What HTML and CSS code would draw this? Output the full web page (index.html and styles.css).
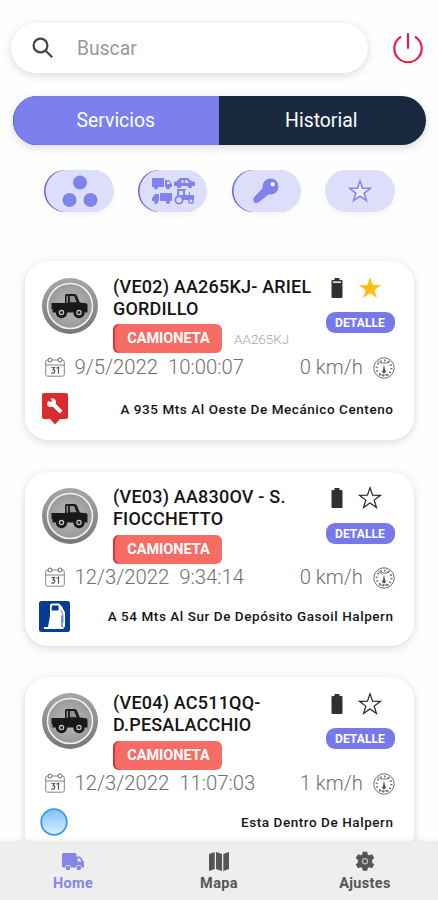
FILE: index.html
```html
<!DOCTYPE html>
<html lang="es">
<head>
<meta charset="utf-8">
<title>Servicios</title>
<link rel="stylesheet" href="styles.css">
</head>
<body>
<svg class="defs" aria-hidden="true">
  <defs>
    <radialGradient id="steel"><stop offset="0" stop-color="#bbb"/><stop offset="1" stop-color="#999"/></radialGradient>
    <linearGradient id="rim" x1="0" y1="0" x2="0" y2="1"><stop offset="0" stop-color="#a6a6a6"/><stop offset="1" stop-color="#777"/></linearGradient>
    <linearGradient id="sky" x1="0" y1="0" x2="0" y2="1"><stop offset="0" stop-color="#7fc2f8"/><stop offset="1" stop-color="#d8efff"/></linearGradient>
    <symbol id="pickup" viewBox="0 0 56 56">
      <circle cx="28" cy="28" r="28" fill="url(#rim)"/>
      <circle cx="28" cy="28" r="22.5" fill="url(#steel)" stroke="#f2f2f2" stroke-width="1.600"/>
      <path d="M9.500 25H23v-7.500q0-1.500 1.500-1.500h8q1.800 0 2.500 1.800l2.800 6.700 6.200.8q1.500.2 1.500 1.700v7.500H10.500v-3.500h-1z" fill="#191919"/>
      <path d="M24.500 17.800h1.500v7h-1.500zM27.800 18h4.400l2.500 6.300h-6.900z" fill="#909090"/>
      <g fill="#c9c9c9" stroke="#191919" stroke-width="3"><circle cx="19.500" cy="34.500" r="4.200"/><circle cx="37" cy="34.500" r="4.200"/></g>
      <circle cx="19.500" cy="34.500" r="1.500" fill="#222"/><circle cx="37" cy="34.500" r="1.500" fill="#222"/>
    </symbol>
    <symbol id="calendar" viewBox="0 0 20 20">
      <g fill="none" stroke="#858585" stroke-width="1"><rect x=".7" y="3" width="18.600" height="16.200" rx="2"/><path d="M.7 8h18.600"/></g>
      <g fill="#fff" stroke="#666"><circle cx="5" cy="3" r="2"/><circle cx="15" cy="3" r="2"/></g>
      <path d="M6.500 10.500h3L8 12.700q2 0 1.700 2t-3.400 1.300M11.500 11.200l2-.9v6.500" fill="none" stroke="#555" stroke-width="1.200"/>
    </symbol>
    <symbol id="gauge" viewBox="0 0 22 22">
      <g fill="none" stroke="#606060"><circle cx="11" cy="11" r="10.200" stroke-width=".9"/><circle cx="11" cy="11" r="7.400" stroke-width="2" stroke-dasharray="1.300 2.575"/><path d="M5 4l3 2h6l3-2M6 18h10" stroke-width=".9"/></g>
      <path d="M11 7.500l1.100 5.500a1.800 1.800 0 1 1-2.200 0z" fill="#555"/>
    </symbol>
    <symbol id="battery" viewBox="0 0 12 22"><path d="M3.500 1h5v2H10.500q1 0 1 1v16q0 1-1 1h-9q-1 0-1-1V4q0-1 1-1h2z" fill="#303030"/></symbol>
    <symbol id="battery-low" viewBox="0 0 12 22"><path d="M3.500 1h5v2H10.500q1 0 1 1v16q0 1-1 1h-9q-1 0-1-1V4q0-1 1-1h2z" fill="#303030"/><path d="M2 4.300h8V6H2z" fill="#ddd"/></symbol>
    <symbol id="star" viewBox="0 0 24 24"><path d="M12 1.800l2.600 7.400 7.900.1-6.300 4.800 2.300 7.500-6.500-4.500-6.500 4.500 2.300-7.500-6.300-4.800 7.900-.1z"/></symbol>
    <symbol id="truck" viewBox="0 0 24 20">
      <path d="M1 3Q1 1.500 2.500 1.500H14q1.500 0 1.500 1.500V5h3.500L23 10v6h-2.200a3 3 0 0 0-5.900 0H9.900a3 3 0 0 0-5.900 0H2.500Q1 16 1 14.500z"/>
      <circle cx="7" cy="16.500" r="2.300"/><circle cx="17.900" cy="16.500" r="2.300"/><path d="M16.600 6.700h1.800l2.300 3.300h-4.100z" fill="#eee"/>
    </symbol>
  </defs>
</svg>

<div class="screen">
  <header class="top">
    <label class="search">
      <svg width="22" height="22" viewBox="0 0 22 22" fill="none" stroke="#444" stroke-width="2.200"><circle cx="8.500" cy="8.500" r="6.900"/><path d="M13.500 13.500l6.700 6.700"/></svg>
      <span class="placeholder">Buscar</span>
    </label>
    <svg class="power" width="30" height="30" viewBox="0 0 30 30" fill="none" stroke="#e41b44" stroke-width="2.100" stroke-linecap="round"><path d="M15 1v14M7.300 4.200a13.700 13.700 0 1 0 15.400 0"/></svg>
  </header>

  <nav class="tabs"><span class="tab active">Servicios</span><span class="tab history">Historial</span></nav>

  <div class="chips">
    <span class="chip edge dots"><svg width="36" height="33" viewBox="0 0 36 33"><circle cx="18" cy="7.500" r="7"/><circle cx="7.500" cy="25" r="7"/><circle cx="28.500" cy="25" r="7"/></svg></span>
    <span class="chip edge"><svg width="44" height="28" viewBox="0 0 44 28">
      <path d="M1 1h12v9H1zM14 3h4l3 4v3h-7z"/><circle cx="5" cy="10.500" r="2"/><circle cx="17" cy="10.500" r="2"/>
      <path d="M23 5l3-1 3-3h8l3 3 4 1v4H23z"/><circle cx="28" cy="9" r="2.200"/><circle cx="39" cy="9" r="2.200"/>
      <path d="M9 16h12v8H9zM1 24v-3l3-4h4v7z"/><circle cx="5" cy="25" r="2"/><circle cx="17" cy="25" r="2"/>
      <path d="M26 12h9v1h-1v5h4v-3h1v3h4v5H31v-4h-5v-6z"/><path d="M28 14h4v4h-4zM30.500 3h2v3h-2zM34 3h2l2 3h-4zM16 4.500h2l1.500 2.500H16z" fill="#dddffa"/>
      <circle cx="28" cy="23" r="3.600" fill="#dddffa" stroke="#8083ee" stroke-width="1.800"/><circle cx="40" cy="24" r="2.200" fill="#dddffa" stroke="#8083ee" stroke-width="1.400"/>
    </svg></span>
    <span class="chip edge"><svg width="26" height="26" viewBox="0 0 26 26"><circle cx="17.500" cy="8.500" r="8"/><path d="M11 8.500L1.800 18.500Q0 20.300.3 22.500T2.500 25q2 .5 4-1.500l11.500-9z"/><circle cx="19.700" cy="6.300" r="2.200" fill="#f1f1ff"/></svg></span>
    <span class="chip"><svg class="chip-star" width="24" height="24"><use href="#star"/></svg></span>
  </div>

  <main class="list">
    <article class="card first">
      <div class="head">
        <svg class="avatar"><use href="#pickup"/></svg>
        <div class="info">
          <h2 class="title">(VE02) AA265KJ- ARIEL<br>GORDILLO</h2>
          <div class="tags"><span class="tag">CAMIONETA</span><span class="plate">AA265KJ</span></div>
        </div>
        <div class="side">
          <div class="marks"><svg class="bat"><use href="#battery-low"/></svg><svg class="fav on"><use href="#star"/></svg></div>
          <span class="detail">DETALLE</span>
        </div>
      </div>
      <div class="stats"><svg class="cal"><use href="#calendar"/></svg><span class="date">9/5/2022&nbsp; 10:00:07</span><span class="speed">0 km/h</span><svg class="gau"><use href="#gauge"/></svg></div>
      <div class="place">
        <svg width="26" height="32" viewBox="0 0 26 32"><path d="M2 0h22q2 0 2 2v22q0 2-2 2h-6l-5 5.500L8 26H2q-2 0-2-2V2Q0 0 2 0z" fill="#d92c31"/><path d="M6 6.500l3.200 1 .8-.8L9 3.800q4-.3 5 3.200l-.2 2.300 6.700 7-2.700 2.800-7-6.800q-5 1.300-5.800-2.800z" transform="translate(0 1.500)" fill="#fff"/></svg>
        <span class="where">A 935 Mts Al Oeste De Mecánico Centeno</span>
      </div>
    </article>

    <article class="card second">
      <div class="head">
        <svg class="avatar"><use href="#pickup"/></svg>
        <div class="info">
          <h2 class="title">(VE03) AA830OV - S.<br>FIOCCHETTO</h2>
          <div class="tags"><span class="tag">CAMIONETA</span></div>
        </div>
        <div class="side">
          <div class="marks"><svg class="bat"><use href="#battery"/></svg><svg class="fav"><use href="#star"/></svg></div>
          <span class="detail">DETALLE</span>
        </div>
      </div>
      <div class="stats"><svg class="cal"><use href="#calendar"/></svg><span class="date">12/3/2022&nbsp; 9:34:14</span><span class="speed">0 km/h</span><svg class="gau"><use href="#gauge"/></svg></div>
      <div class="place">
        <svg class="fuel" width="31" height="31" viewBox="0 0 31 31"><rect width="31" height="31" rx="2.500" fill="#073b96"/><path d="M11 4.500q0-2 2-2h7l3 3 3 6v14q-1 2-2.500 0V15l-1-1v12h2v2H5v-2h4l2-11z" fill="#fff"/><path d="M13 4.500h6.500v5H12.500z" fill="#073b96"/><path d="M22 9l2 5v8" fill="none" stroke="#6c8bc4"/></svg>
        <span class="where">A 54 Mts Al Sur De Depósito Gasoil Halpern</span>
      </div>
    </article>

    <article class="card third">
      <div class="head">
        <svg class="avatar"><use href="#pickup"/></svg>
        <div class="info">
          <h2 class="title">(VE04) AC511QQ-<br>D.PESALACCHIO</h2>
          <div class="tags"><span class="tag">CAMIONETA</span></div>
        </div>
        <div class="side">
          <div class="marks"><svg class="bat"><use href="#battery"/></svg><svg class="fav"><use href="#star"/></svg></div>
          <span class="detail">DETALLE</span>
        </div>
      </div>
      <div class="stats"><svg class="cal"><use href="#calendar"/></svg><span class="date">12/3/2022&nbsp; 11:07:03</span><span class="speed">1 km/h</span><svg class="gau"><use href="#gauge"/></svg></div>
      <div class="place">
        <svg width="28" height="28" viewBox="0 0 28 28"><circle cx="14" cy="14" r="12.800" fill="url(#sky)" stroke="#3c9be0" stroke-width="1.800"/></svg>
        <span class="where">Esta Dentro De Halpern</span>
      </div>
    </article>
  </main>

  <footer class="bar">
    <div class="item current"><svg width="24" height="20"><use href="#truck"/></svg><span>Home</span></div>
    <div class="item"><svg width="24" height="20" viewBox="0 0 24 20"><path d="M2 2.500L7.700.5v17L2 19.500zM9 .5l6 2v17l-6-2zM16.300 2.500L22 .5v17l-5.700 2z"/></svg><span>Mapa</span></div>
    <div class="item"><svg width="22" height="22" viewBox="0 0 22 22"><path d="M8.700.7h4.600l.6 2.900 1.600.8 2.900-1 2.300 3.900-2.300 2v2.800l2.300 2-2.300 3.900-2.900-1-1.600.8-.6 2.900H8.700l-.6-2.900-1.600-.8-2.900 1-2.300-3.900 2.300-2V9.300l-2.300-2 2.300-3.900 2.900 1 1.600-.8z"/><circle cx="11" cy="10.700" r="2.700" fill="none" stroke="#bbb" stroke-width="1.300"/></svg><span>Ajustes</span></div>
  </footer>
</div>
</body>
</html>
```
FILE: styles.css
```css
* { box-sizing: border-box; }
body { margin: 0; background: #fefefe; font-family: Roboto, "Liberation Sans", sans-serif; color: #151515; }
svg { display: block; flex: none; }
.defs { position: absolute; width: 0; height: 0; }
.screen { width: 438px; height: 900px; overflow: hidden; display: flex; flex-direction: column; white-space: nowrap; }

.top { display: flex; align-items: center; padding: 23px 0 0 11px; }
.search { display: flex; align-items: center; width: 357px; height: 50px; padding-left: 21px; border-radius: 25px; background: #fff; box-shadow: 0 2px 10px rgba(0, 0, 0, .15); }
.placeholder { margin-left: 23px; font-size: 19.300px; color: #999; }
.power { margin-left: 24.500px; }

.tabs { display: flex; flex: none; width: 413px; height: 49px; margin: 23px 0 0 13px; border-radius: 25px; overflow: hidden; background: #192a40; box-shadow: 0 3px 8px rgba(0, 0, 0, .14); }
.tab { flex: 1; display: flex; align-items: center; justify-content: center; color: #fff; font-size: 19.400px; }
.tab.active { background: #7c80ef; box-shadow: inset 1px 0 1px #6669c9; }
.history { padding-right: 2px; }

.chips { display: flex; gap: 24.300px; margin: 25px 0 0 44px; }
.chip { display: flex; align-items: center; justify-content: center; width: 69.500px; height: 42px; border-radius: 21px; background: #dddffa; fill: #8083ee; box-shadow: 0 3px 6px rgba(80, 80, 150, .05); }
.chip.edge { box-shadow: inset 1.500px 0 0 #6669d2, 0 3px 6px rgba(80, 80, 150, .05); }
.dots { padding-left: 2px; }
.chip-star { fill: #eeeaf8; stroke: #8083ee; stroke-width: 1.500; }

.list { flex: none; height: 629px; padding: 49px 24px 0 25px; overflow: hidden; }
.card { padding: 16px 20px 0 17px; border-radius: 23px; background: #fff; box-shadow: 0 2px 10px rgba(0, 0, 0, .15); }
.first { height: 179px; padding-top: 17px; margin-bottom: 32px; }
.second { height: 174px; margin-bottom: 31px; }
.third { height: 180px; padding-top: 17px; }
.head { display: flex; height: 76px; }
.avatar { width: 56px; height: 56px; }
.third .avatar { margin-top: -1px; }
.info { width: 214px; margin: -2px 0 0 15px; }
.title { margin: 0; font-size: 18px; line-height: 22px; font-weight: 500; letter-spacing: .2px; }
.tags { display: flex; align-items: center; margin-top: 5px; }
.first .tags { margin-top: 4px; }
.tag { display: flex; align-items: center; justify-content: center; width: 109px; height: 29px; padding-left: 2px; border-radius: 6px; background: #f76d66; box-shadow: inset 2px 0 0 #d93434; color: #fff; font-size: 14.500px; font-weight: 700; }
.plate { margin-left: 12px; font-size: 13.500px; font-weight: 300; color: #a5a5a5; }
.side { width: 67px; display: flex; flex-direction: column; align-items: flex-end; }
.marks { display: flex; align-items: center; gap: 15px; height: 26px; margin: -3px 12px 0 0; }
.bat { width: 12px; height: 22px; }
.fav { width: 24px; height: 24px; fill: #fff; stroke: #252525; stroke-width: 1.200; overflow: visible; }
.fav.on { fill: #ffbc11; stroke: #ffbc11; stroke-width: .4; }
.detail { display: flex; align-items: center; justify-content: center; width: 69px; height: 21px; margin: 12px -.5px 0 0; border-radius: 9px; background: #7779eb; color: #fff; font-size: 12px; font-weight: 700; letter-spacing: .1px; }
.first .detail { margin-top: 11px; }
.third .detail { margin-top: 11px; }
.stats { display: flex; align-items: center; height: 26px; padding-left: 3px; font-size: 20.300px; font-weight: 300; color: #707070; }
.cal { width: 20px; height: 20px; }
.date { margin-left: 9.500px; }
.speed { margin-left: auto; }
.gau { width: 22px; height: 22px; margin: 1px -.5px 0 9.500px; }
.place { display: flex; align-items: center; justify-content: space-between; height: 32px; margin-top: 13px; padding-right: .5px; }
.second .place { margin-top: 10px; }
.third .place { margin-top: 10px; margin-left: -2px; }
.fuel { margin-left: -3px; }
.where { font-size: 13.500px; font-weight: 500; letter-spacing: .56px; margin-top: -1px; }

.bar { display: flex; flex: none; height: 59px; background: #eee; box-shadow: 0 -1px 5px rgba(0, 0, 0, .06); }
.item { flex: 1; display: flex; flex-direction: column; align-items: center; padding-top: 10px; color: #555; fill: #555; font-size: 14.500px; font-weight: 700; letter-spacing: .35px; }
.item svg { height: 21px; }
.item span { margin-top: 3px; line-height: 17px; }
.item.current { color: #8587e2; fill: #8587e2; }
```
